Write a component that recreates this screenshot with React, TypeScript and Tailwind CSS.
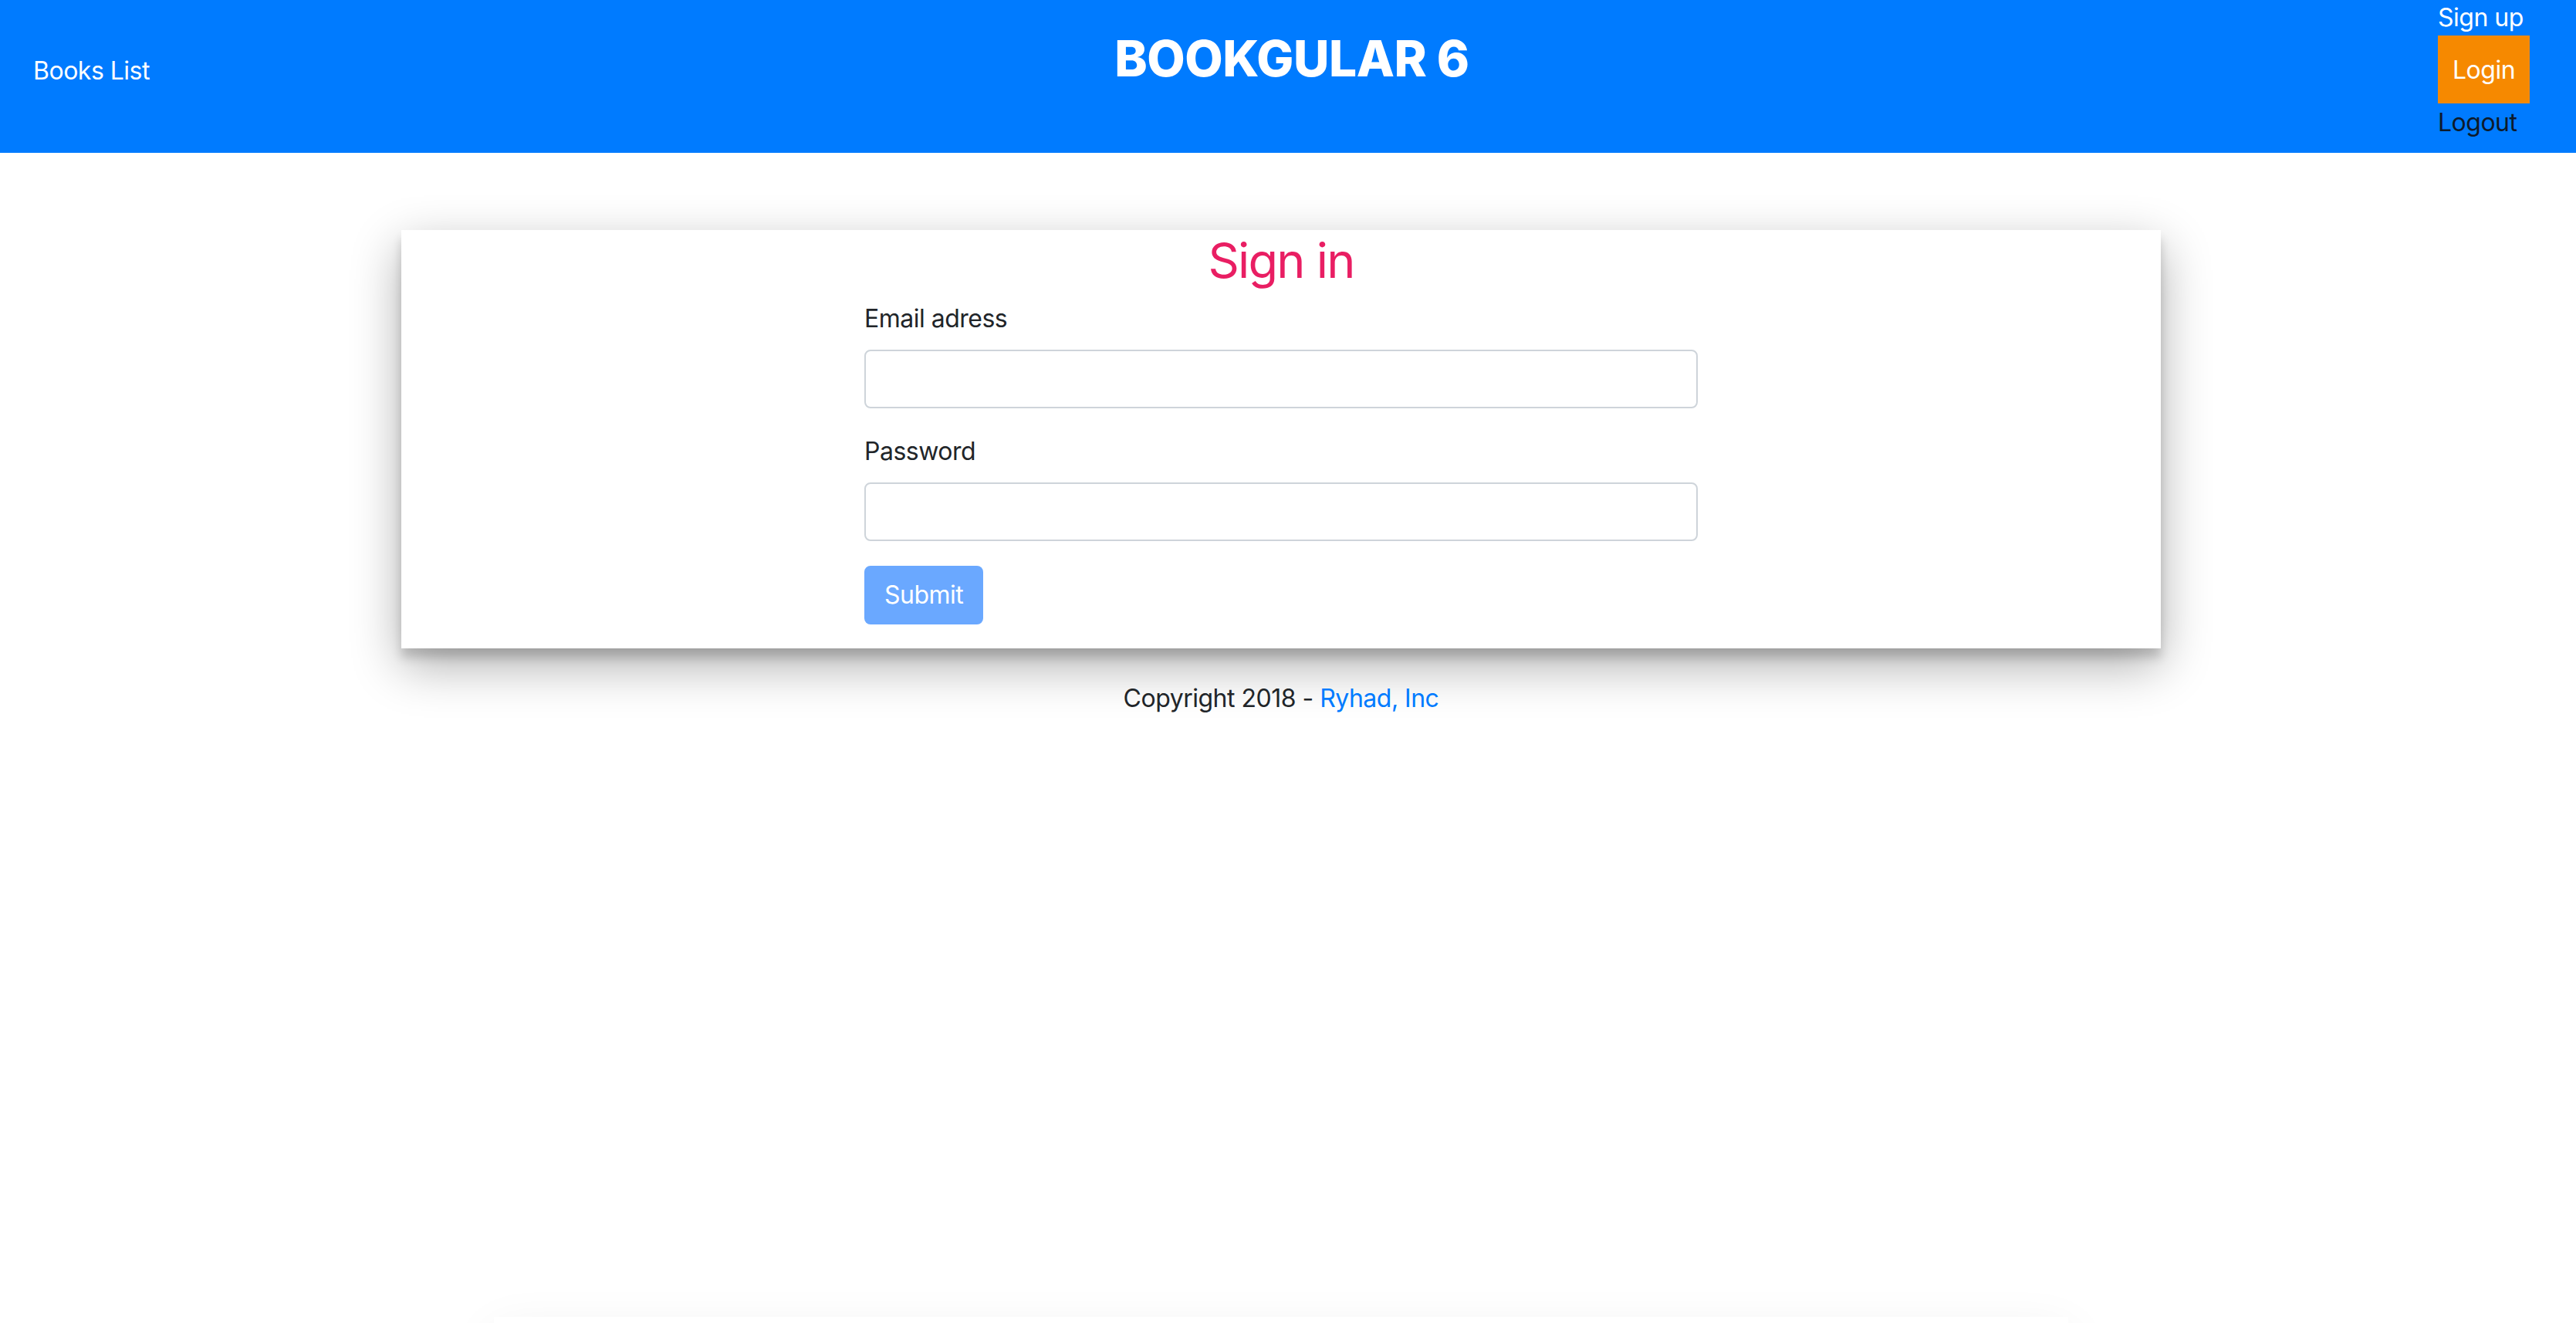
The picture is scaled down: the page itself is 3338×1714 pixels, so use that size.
import React from "react";

const FONT = "font-['Inter','Open_Sans','Liberation_Sans',sans-serif]";

function Header() {
  return (
    <header className="flex items-start h-[198px] bg-[#007bff] text-white tracking-[-0.5px]">
      <a className="mt-[68px] pl-[43px] w-[189px] shrink-0 whitespace-nowrap text-[32px] leading-[48px]">Books List</a>
      <h1 className="flex-1 mt-[38px] text-center text-[64px] leading-[1.2] font-extrabold tracking-[-0.5px]">BOOKGULAR 6</h1>
      <nav className="flex flex-col items-start w-[119px] mr-[60px] text-[32px] leading-[48px]">
        <a className="text-white -mt-[1px] h-[47px]">Sign up</a>
        <a className="w-[119px] pt-[21px] pb-[19px] text-center bg-[#f68900] text-white">Login</a>
        <a className="pt-[1px] text-[#0d1a2b]">Logout</a>
      </nav>
    </header>
  );
}

function Field({ label, type }: { label: string; type: string }) {
  return (
    <div className="mb-[32px]">
      <label className="block mb-[16px] text-[32px] leading-[48px] text-[#212529]">{label}</label>
      <input
        type={type}
        className="block w-full h-[76px] px-[24px] rounded-[8px] border-2 border-[#ced4da] bg-white text-[32px] outline-none"
      />
    </div>
  );
}

function SignIn() {
  return (
    <div className="bg-white pt-[2px] pb-[31px] tracking-[-0.5px] shadow-[0_22px_60px_rgba(0,0,0,0.32),0_12px_12px_rgba(0,0,0,0.16)]">
      <h2 className="mb-[13px] text-center text-[63px] leading-[1.2] tracking-[-1.8px] text-[#e91e63]">Sign in</h2>
      <form className="mx-auto w-[1080px]" onSubmit={(e) => e.preventDefault()}>
        <Field label="Email adress" type="email" />
        <Field label="Password" type="password" />
        <button
          type="submit"
          disabled
          className="h-[76px] px-[24px] rounded-[8px] border-2 border-transparent bg-[#6aa8ff] text-white text-[32px] leading-[48px]"
        >
          Submit
        </button>
      </form>
    </div>
  );
}

export default function App() {
  return (
    <div className={`${FONT} min-h-screen bg-white text-[#212529]`}>
      <Header />
      <div className="pr-[18px] pt-[100px]">
        <main className="mx-auto w-[2280px]">
          <SignIn />
          <p className="mt-[41px] text-center text-[32px] leading-[48px] tracking-[-0.5px]">
            Copyright 2018 - <a className="text-[#007bff]">Ryhad, Inc</a>
          </p>
          {/* next panel, mostly below the fold */}
          <div className="mx-auto mt-[777px] w-[2040px] h-[400px] bg-white shadow-[0_20px_60px_rgba(0,0,0,0.08)]" />
        </main>
      </div>
    </div>
  );
}
